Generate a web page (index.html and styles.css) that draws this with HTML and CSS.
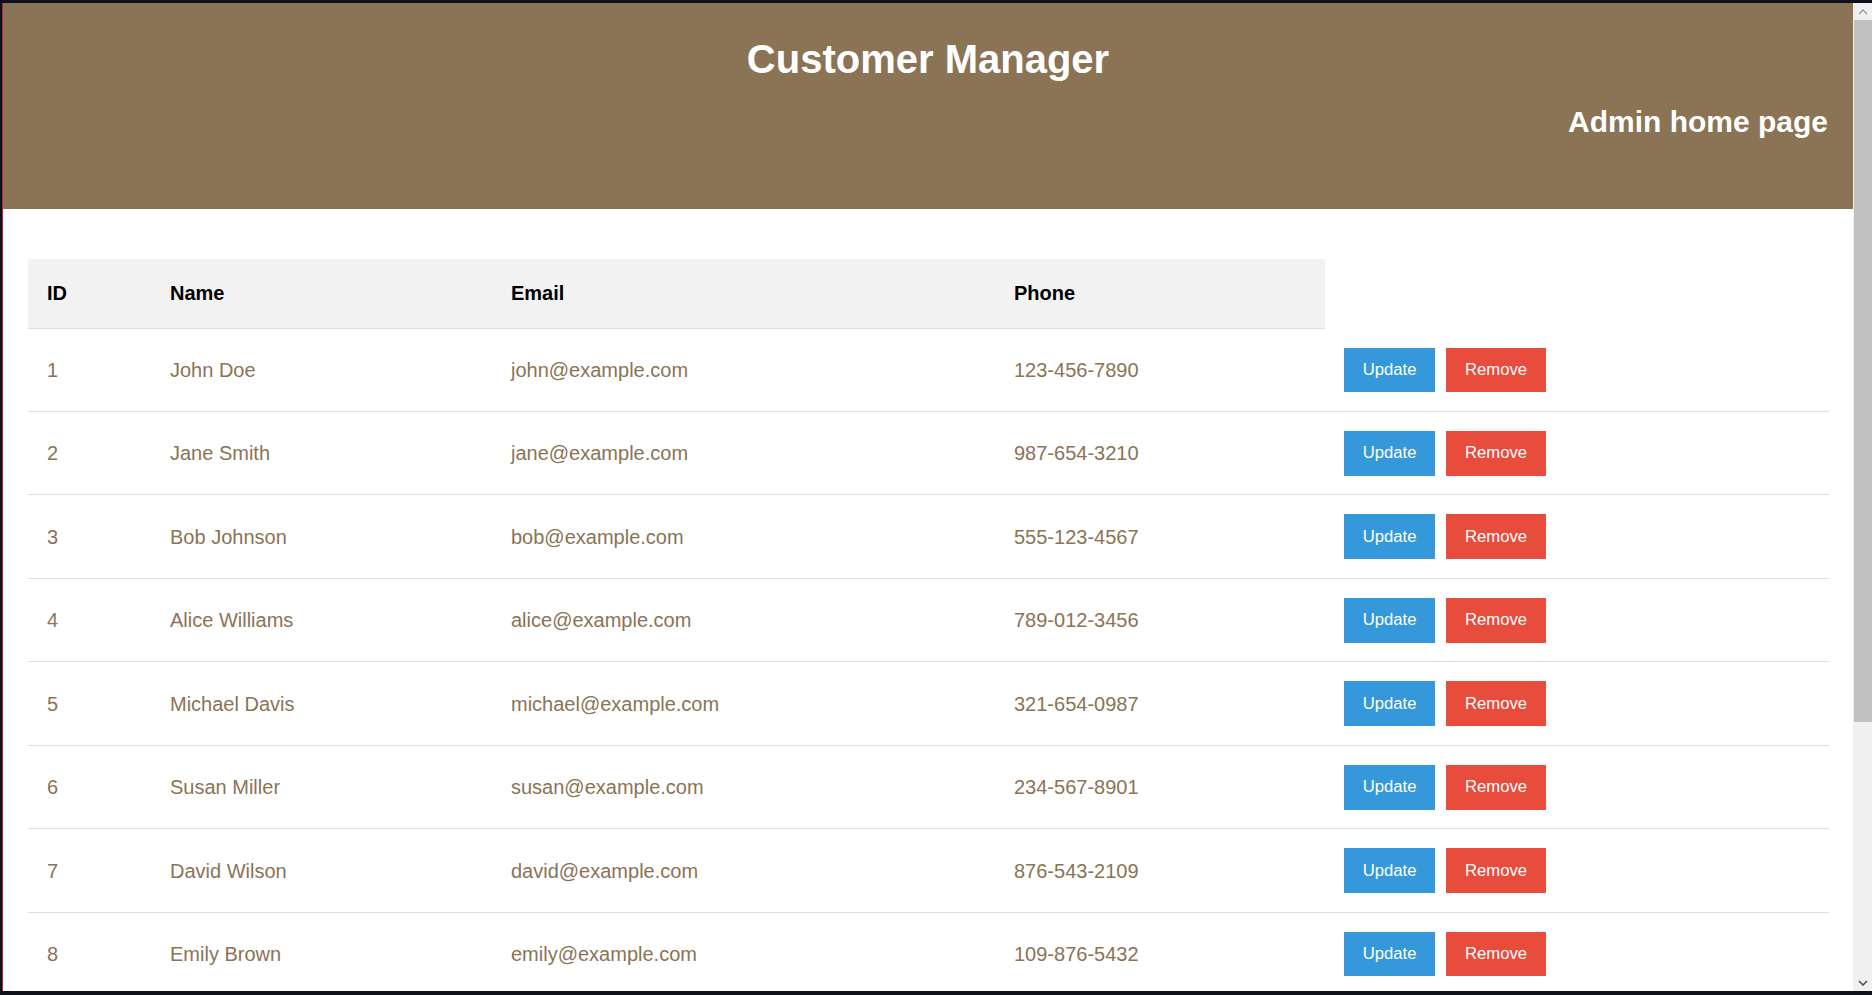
FILE: index.html
```html
<!DOCTYPE html>
<html lang="en">
<head>
<meta charset="utf-8">
<title>Customer Manager</title>
<link rel="stylesheet" href="styles.css">
</head>
<body>
<div class="window">
  <div class="viewport">
    <div class="page">
      <header class="site-header">
        <h1 class="title">Customer Manager</h1>
        <h2 class="subtitle">Admin home page</h2>
      </header>
      <main class="content">
        <table class="customers">
          <colgroup>
            <col class="c-id">
            <col class="c-name">
            <col class="c-email">
            <col class="c-phone">
            <col class="c-actions">
          </colgroup>
          <thead>
            <tr><th>ID</th><th>Name</th><th>Email</th><th>Phone</th></tr>
          </thead>
          <tbody>
            <tr><td>1</td><td>John Doe</td><td>john@example.com</td><td>123-456-7890</td><td><div class="actions"><button class="btn btn-update">Update</button><button class="btn btn-remove">Remove</button></div></td></tr>
            <tr><td>2</td><td>Jane Smith</td><td>jane@example.com</td><td>987-654-3210</td><td><div class="actions"><button class="btn btn-update">Update</button><button class="btn btn-remove">Remove</button></div></td></tr>
            <tr><td>3</td><td>Bob Johnson</td><td>bob@example.com</td><td>555-123-4567</td><td><div class="actions"><button class="btn btn-update">Update</button><button class="btn btn-remove">Remove</button></div></td></tr>
            <tr><td>4</td><td>Alice Williams</td><td>alice@example.com</td><td>789-012-3456</td><td><div class="actions"><button class="btn btn-update">Update</button><button class="btn btn-remove">Remove</button></div></td></tr>
            <tr><td>5</td><td>Michael Davis</td><td>michael@example.com</td><td>321-654-0987</td><td><div class="actions"><button class="btn btn-update">Update</button><button class="btn btn-remove">Remove</button></div></td></tr>
            <tr><td>6</td><td>Susan Miller</td><td>susan@example.com</td><td>234-567-8901</td><td><div class="actions"><button class="btn btn-update">Update</button><button class="btn btn-remove">Remove</button></div></td></tr>
            <tr><td>7</td><td>David Wilson</td><td>david@example.com</td><td>876-543-2109</td><td><div class="actions"><button class="btn btn-update">Update</button><button class="btn btn-remove">Remove</button></div></td></tr>
            <tr><td>8</td><td>Emily Brown</td><td>emily@example.com</td><td>109-876-5432</td><td><div class="actions"><button class="btn btn-update">Update</button><button class="btn btn-remove">Remove</button></div></td></tr>
          </tbody>
        </table>
      </main>
    </div>
    <div class="scrollbar">
      <div class="sb-btn sb-up">
        <svg width="10" height="6" viewBox="0 0 10 6"><path d="M1 5 L5 1 L9 5" fill="none" stroke="#a3a3a3" stroke-width="1.6"/></svg>
      </div>
      <div class="sb-track">
        <div class="sb-thumb"></div>
      </div>
      <div class="sb-btn sb-down">
        <svg width="10" height="6" viewBox="0 0 10 6"><path d="M1 1 L5 5 L9 1" fill="none" stroke="#505050" stroke-width="1.6"/></svg>
      </div>
    </div>
  </div>
</div>
</body>
</html>
```

FILE: styles.css
```css
html, body {
  margin: 0;
  padding: 0;
  height: 100%;
  overflow: hidden;
  background: #10101a;
}

.window {
  box-sizing: border-box;
  width: 1872px;
  height: 995px;
  padding: 3px 0 4px 0;
  display: flex;
  flex-direction: column;
  background: #10101a;
}

.viewport {
  flex: 1;
  display: flex;
  min-height: 0;
  margin-left: 2px;
  border-left: 1px solid #b3224d;
}

.page {
  flex: 1;
  overflow: hidden;
  background: #ffffff;
  font-family: "Liberation Sans", Arial, sans-serif;
}

.site-header {
  box-sizing: border-box;
  height: 206px;
  background: #8b7355;
  color: #ffffff;
  padding: 0 25px;
  display: flex;
  flex-direction: column;
}

.title {
  margin: 33px 0 0 0;
  font-size: 40px;
  line-height: 46px;
  font-weight: bold;
  text-align: center;
}

.subtitle {
  margin: 22.5px 0 0 0;
  font-size: 30px;
  line-height: 34px;
  font-weight: bold;
  text-align: right;
}

.content {
  padding: 50px 24px 0 25px;
}

.customers {
  width: 100%;
  border-collapse: collapse;
  table-layout: fixed;
  font-size: 20px;
}

.c-id { width: 123px; }
.c-name { width: 341px; }
.c-email { width: 503px; }
.c-phone { width: 330px; }
.c-actions { width: 504px; }

.customers th {
  background: #f2f2f2;
  color: #000000;
  font-weight: bold;
  text-align: left;
  padding: 19px 19px;
  line-height: 31px;
  border-bottom: 1px solid #dddddd;
}

.customers td {
  color: #8b7355;
  text-align: left;
  padding: 19px 19px 18.9px 19px;
  line-height: 24px;
  border-bottom: 1px solid #dddddd;
  white-space: nowrap;
}

.actions {
  display: flex;
  gap: 11px;
}

.btn {
  border: none;
  border-radius: 0;
  margin: 0;
  padding: 12.5px 18.75px;
  font-family: "Liberation Sans", Arial, sans-serif;
  font-size: 16.67px;
  line-height: 19.6px;
  color: #ffffff;
  cursor: pointer;
}

.btn-update { background: #3498db; }
.btn-remove { background: #e74c3c; }

.scrollbar {
  width: 19px;
  display: flex;
  flex-direction: column;
  background: #f0f0f0;
}

.sb-btn {
  height: 17px;
  display: flex;
  align-items: center;
  justify-content: center;
  background: #f0f0f0;
}

.sb-track {
  flex: 1;
  padding: 0 0 0 1px;
  display: flex;
  flex-direction: column;
}

.sb-thumb {
  height: 702px;
  background: #c1c1c1;
}
```
